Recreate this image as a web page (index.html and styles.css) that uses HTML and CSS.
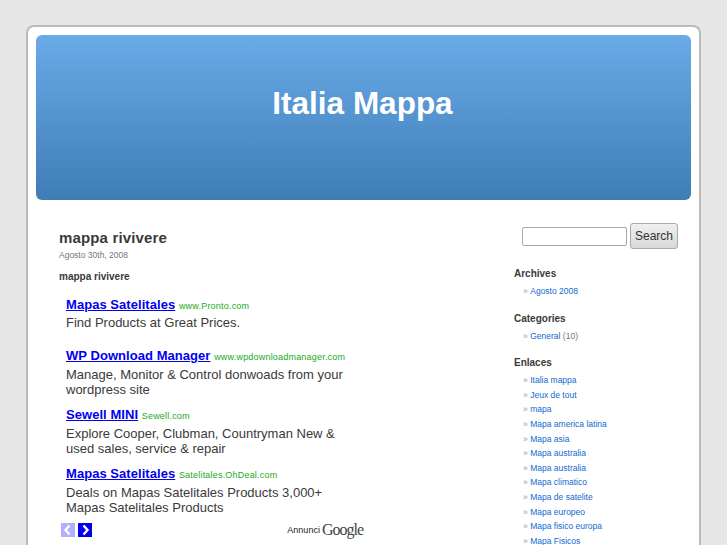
FILE: index.html
```html
<!DOCTYPE html>
<html lang="en">
<head>
    <meta charset="UTF-8">
    <title>Italia Mappa</title>
    <link rel="stylesheet" href="styles.css">
</head>
<body>

    <div class="page">

        <!-- Header -->
        <div class="header">
            <a href="#" class="blog-title">Italia Mappa</a>
        </div>

        <div class="columns">

            <!-- Main post -->
            <div class="content">
                <h2 class="post-title">mappa rivivere</h2>
                <div class="post-date">Agosto 30th, 2008</div>
                <p class="post-lead">mappa rivivere</p>

                <div class="ad-box">
                    <div class="ad ad-first">
                        <div class="ad-head"><a href="#">Mapas Satelitales</a> <span class="ad-url">www.Pronto.com</span></div>
                        <div class="ad-text">Find Products at Great Prices.</div>
                    </div>
                    <div class="ad">
                        <div class="ad-head"><a href="#">WP Download Manager</a> <span class="ad-url">www.wpdownloadmanager.com</span></div>
                        <div class="ad-text">Manage, Monitor &amp; Control donwoads from your wordpress site</div>
                    </div>
                    <div class="ad">
                        <div class="ad-head"><a href="#">Sewell MINI</a> <span class="ad-url">Sewell.com</span></div>
                        <div class="ad-text">Explore Cooper, Clubman, Countryman New &amp; used sales, service &amp; repair</div>
                    </div>
                    <div class="ad ad-last">
                        <div class="ad-head"><a href="#">Mapas Satelitales</a> <span class="ad-url">Satelitales.OhDeal.com</span></div>
                        <div class="ad-text">Deals on Mapas Satelitales Products 3,000+ Mapas Satelitales Products</div>
                    </div>
                    <div class="ad-foot">
                        <div class="ad-arrows">
                            <span class="arrow arrow-off">
                                <svg width="14" height="14" viewBox="0 0 14 14"><path d="M8.500 2.500 4.500 7l4 4.500" fill="none" stroke="#fff" stroke-width="2.400"/></svg>
                            </span>
                            <span class="arrow">
                                <svg width="14" height="14" viewBox="0 0 14 14"><path d="M5.500 2.500 9.500 7l-4 4.500" fill="none" stroke="#fff" stroke-width="2.400"/></svg>
                            </span>
                        </div>
                        <div class="ad-credit"><span class="annunci">Annunci</span> <span class="google">Google</span></div>
                    </div>
                </div>
            </div>

            <!-- Sidebar -->
            <div class="sidebar">
                <form class="search-form">
                    <input type="text" class="search-input">
                    <button type="button" class="search-btn">Search</button>
                </form>

                <h3>Archives</h3>
                <ul>
                    <li><a href="#">Agosto 2008</a></li>
                </ul>

                <h3>Categories</h3>
                <ul>
                    <li><a href="#">General</a> <span class="count">(10)</span></li>
                </ul>

                <h3>Enlaces</h3>
                <ul>
                    <li><a href="#">Italia mappa</a></li>
                    <li><a href="#">Jeux de tout</a></li>
                    <li><a href="#">mapa</a></li>
                    <li><a href="#">Mapa america latina</a></li>
                    <li><a href="#">Mapa asia</a></li>
                    <li><a href="#">Mapa australia</a></li>
                    <li><a href="#">Mapa australia</a></li>
                    <li><a href="#">Mapa climatico</a></li>
                    <li><a href="#">Mapa de satelite</a></li>
                    <li><a href="#">Mapa europeo</a></li>
                    <li><a href="#">Mapa fisico europa</a></li>
                    <li><a href="#">Mapa Fisicos</a></li>
                </ul>
            </div>

        </div>
    </div>

</body>
</html>
```

FILE: styles.css
```css
/* General Styles */
html, body {
    height: 545px;
    overflow: hidden;
}

body {
    font-family: "Liberation Sans", Arial, sans-serif;
    margin: 0;
    padding: 0;
    background-color: #e7e7e7;
    color: #3a3a3a;
}

a {
    text-decoration: none;
}

.page {
    width: 655px;
    margin: 25px auto 0;
    padding: 8px;
    background-color: #fff;
    border: 2px solid #bbb;
    border-bottom: none;
    border-radius: 8px 8px 0 0;
}

/* Header */
.header {
    height: 165px;
    border-radius: 6px;
    background: linear-gradient(#69aae8, #3f7db5);
    text-align: center;
}

.blog-title {
    display: block;
    padding: 50px 2px 0 0;
    font-size: 31.500px;
    font-weight: bold;
    line-height: 37px;
    color: #fff;
}

.columns {
    display: flex;
}

/* Main post */
.content {
    width: 304px;
    padding: 29px 0 0 23px;
}

.post-title {
    margin: 0;
    font-size: 15px;
    line-height: 18px;
    letter-spacing: 0.150px;
    color: #3a3a3a;
}

.post-date {
    margin-top: 2px;
    font-size: 8.500px;
    line-height: 12px;
    color: #777;
}

.post-lead {
    margin: 9px 0 0;
    font-size: 10px;
    font-weight: bold;
    line-height: 14px;
}

/* Ads */
.ad-box {
    margin-top: 12px;
    padding-left: 7px;
}

.ad {
    margin-bottom: 9px;
}

.ad-first {
    margin-bottom: 17px;
}

.ad-last {
    margin-bottom: 6px;
}

.ad-head {
    font-size: 13px;
    font-weight: bold;
    line-height: 17px;
    letter-spacing: 0.050px;
}

.ad-head a {
    color: #0000ee;
    text-decoration: underline;
}

.ad-url {
    font-size: 9px;
    font-weight: normal;
    letter-spacing: 0.200px;
    color: #22aa22;
}

.ad-text {
    margin-top: 1px;
    font-size: 13px;
    line-height: 15px;
    color: #3a3a3a;
}

.ad-first .ad-text {
    margin-top: 0;
}

.ad-foot {
    display: flex;
    justify-content: space-between;
    align-items: center;
    margin-left: -5px;
    width: 302px;
}

.ad-arrows {
    display: flex;
    gap: 3px;
}

.arrow {
    display: block;
    width: 14px;
    height: 14px;
    background-color: #0000ee;
}

.arrow svg {
    display: block;
}

.arrow-off {
    background-color: #b0b0fb;
}

.ad-credit {
    display: flex;
    align-items: center;
    gap: 2px;
}

.annunci {
    font-size: 9px;
    color: #222;
}

.google {
    font-family: "Liberation Serif", serif;
    font-size: 16px;
    line-height: 17px;
    letter-spacing: -1px;
    color: #444;
}

/* Sidebar */
.sidebar {
    margin-left: 151px;
    width: 177px;
    padding-top: 23px;
}

.search-form {
    display: flex;
    align-items: center;
    gap: 3px;
    margin: 0 0 18px 8px;
}

.search-input {
    box-sizing: border-box;
    width: 105px;
    height: 19px;
    margin: 0;
    padding: 0;
    border: 1px solid #aaa;
    border-radius: 2px;
    background-color: #fff;
}

.search-btn {
    box-sizing: border-box;
    width: 48px;
    height: 26px;
    margin: 0;
    padding: 0;
    border: 1px solid #aaa;
    border-radius: 3px;
    background: linear-gradient(#f0f0f0, #d8d8d8);
    font-family: "Liberation Sans", Arial, sans-serif;
    font-size: 12px;
    color: #333;
}

.sidebar h3 {
    margin: 0;
    font-size: 10px;
    line-height: 14px;
    color: #3a3a3a;
}

.sidebar ul {
    list-style: none;
    margin: 3px 0 13px;
    padding: 0 0 0 9px;
}

.sidebar li {
    font-size: 8.500px;
    line-height: 14.600px;
    color: #777;
}

.sidebar li::before {
    content: "\00BB";
    margin-right: 2.500px;
    color: #999;
}

.sidebar li a {
    color: #0f6ad0;
}

.count {
    color: #777;
}
```
